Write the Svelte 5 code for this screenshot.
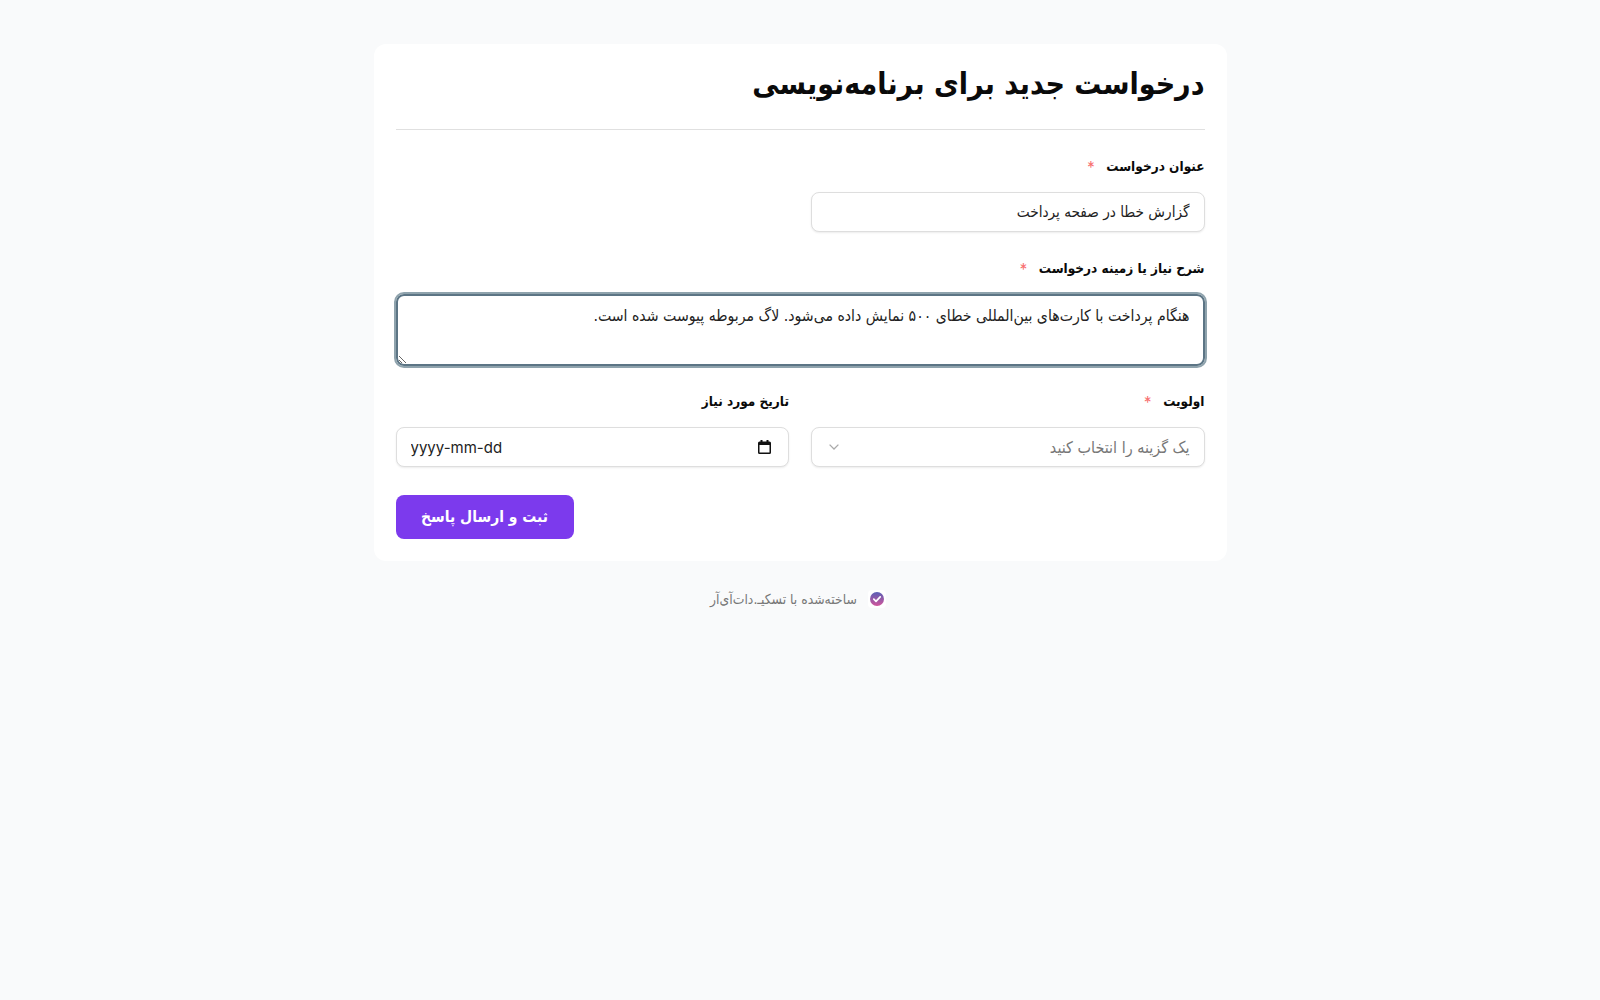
<script>
	let title = $state('گزارش خطا در صفحه پرداخت');
	let details = $state('هنگام پرداخت با کارت‌های بین‌المللی خطای ۵۰۰ نمایش داده می‌شود. لاگ مربوطه پیوست شده است.');
	let priority = $state('');
	let due = $state('');
</script>

<main class="page" dir="rtl">
	<form class="card" onsubmit={(e) => e.preventDefault()}>
		<h1>درخواست جدید برای برنامه‌نویسی</h1>

		<div class="field half">
			<label for="title">عنوان درخواست <span class="req">*</span></label>
			<input id="title" type="text" bind:value={title} />
		</div>

		<div class="field tight">
			<label for="details">شرح نیاز یا زمینه درخواست <span class="req">*</span></label>
			<textarea id="details" bind:value={details}></textarea>
		</div>

		<div class="row">
			<div class="field">
				<label for="priority">اولویت <span class="req">*</span></label>
				<div class="control">
					<select id="priority" bind:value={priority}>
						<option value="">یک گزینه را انتخاب کنید</option>
						<option value="high">بالا</option>
						<option value="mid">متوسط</option>
						<option value="low">پایین</option>
					</select>
					<svg class="chevron" viewBox="0 0 10 6" aria-hidden="true"><path d="M0.6 0.6L5 5l4.4-4.4" /></svg>
				</div>
			</div>
			<div class="field">
				<label for="due">تاریخ مورد نیاز</label>
				<div class="control">
					<input id="due" class="date" type="text" placeholder="yyyy-mm-dd" bind:value={due} />
					<svg class="calendar" viewBox="0 0 13 14" aria-hidden="true">
						<path d="M2.5 0h2v1.5h4V0h2v1.5h1A1.5 1.5 0 0 1 13 3v9.5a1.5 1.5 0 0 1-1.5 1.5h-10A1.5 1.5 0 0 1 0 12.5V3a1.5 1.5 0 0 1 1.5-1.5h1zM1.5 5v7.5h10V5z" fill-rule="evenodd" />
					</svg>
				</div>
			</div>
		</div>

		<div class="actions">
			<button type="submit">ثبت و ارسال پاسخ</button>
		</div>
	</form>

	<footer>
		<svg class="badge" viewBox="0 0 18 18" aria-hidden="true">
			<defs>
				<linearGradient id="logo" x1="0" y1="0" x2="0" y2="1">
					<stop offset="0" stop-color="#5a5fb5" />
					<stop offset="1" stop-color="#d1559b" />
				</linearGradient>
			</defs>
			<rect width="18" height="18" rx="4" fill="#fff" />
			<circle cx="9" cy="9" r="7" fill="url(#logo)" />
			<path d="M5.8 9.2l2.2 2.1 4.2-4.4" fill="none" stroke="#fff" stroke-width="1.7" stroke-linecap="round" stroke-linejoin="round" />
		</svg>
		<span>ساخته‌شده با تسکیـ.دات‌آی‌آر</span>
	</footer>
</main>

<style>
	:global(body) {
		background: #f9fafb;
		margin: 0;
	}

	.page {
		font-family: 'DejaVu Sans Condensed', 'DejaVu Sans', sans-serif;
		padding: 44px 0;
	}

	.card {
		background: #fff;
		border-radius: 12px;
		box-sizing: border-box;
		display: flex;
		flex-direction: column;
		margin: 0 auto;
		padding: 22px;
		width: 853px;
	}

	h1 {
		border-bottom: 1px solid #e0e0e0;
		color: #0a0a0a;
		font-size: 30px;
		font-weight: 700;
		line-height: 36px;
		margin: 0 0 26px;
		padding-bottom: 27px;
	}

	.field {
		display: flex;
		flex-direction: column;
		gap: 16px;
		margin-bottom: 26px;
		min-width: 0;
	}

	.tight {
		margin-bottom: 25px;
	}

	.half {
		width: calc(50% - 11px);
	}

	label {
		color: #0a0a0a;
		font-size: 13.5px;
		font-weight: 700;
		line-height: 20px;
	}

	.req {
		color: #f87171;
		margin-inline-start: 8px;
	}

	input,
	textarea,
	select {
		background: #fff;
		border: 1px solid #dedede;
		border-radius: 8px;
		box-shadow: 0 1px 2px rgb(0 0 0 / 0.08);
		box-sizing: border-box;
		color: #222;
		font-family: inherit;
		font-size: 15.2px;
		height: 40px;
		padding: 0 14px;
		width: 100%;
	}

	textarea {
		border: 2px solid #5c7585;
		display: block;
		font-size: 15.7px;
		height: 72px;
		outline: 2px solid #8fa3ad;
		padding: 10px 13px 8px;
	}

	select {
		appearance: none;
		color: #777;
		font-size: 16px;
	}

	.control {
		position: relative;
	}

	.chevron {
		fill: none;
		height: 6px;
		left: 18px;
		position: absolute;
		stroke: #aaa;
		stroke-width: 1.3;
		top: 17px;
		width: 10px;
	}

	.date {
		direction: ltr;
		font-family: 'Inter', sans-serif;
		font-size: 15px;
	}

	.date::placeholder {
		color: #222;
		opacity: 1;
	}

	.calendar {
		fill: #111;
		height: 14px;
		position: absolute;
		right: 18px;
		top: 13px;
		width: 13px;
	}

	.row {
		display: grid;
		gap: 22px;
		grid-template-columns: 1fr 1fr;
	}

	.actions {
		display: flex;
		justify-content: flex-end;
		padding-top: 2px;
	}

	button {
		background: #7c3aed;
		border: 0;
		border-radius: 8px;
		color: #fff;
		font-family: inherit;
		font-size: 15.5px;
		font-weight: 700;
		height: 44px;
		width: 178px;
	}

	footer {
		align-items: center;
		color: #777;
		display: flex;
		font-size: 13.8px;
		gap: 11px;
		justify-content: center;
		line-height: 20px;
		margin-top: 28px;
		padding-right: 4px;
	}

	.badge {
		height: 18px;
		width: 18px;
	}
</style>
